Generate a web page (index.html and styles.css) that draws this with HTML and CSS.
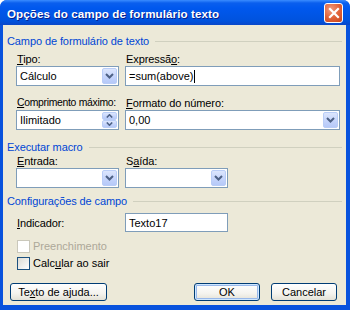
FILE: index.html
```html
<!DOCTYPE html>
<html lang="pt">
<head>
<meta charset="utf-8">
<title>Opções do campo de formulário texto</title>
<link rel="stylesheet" href="styles.css">
</head>
<body>
<div class="window">
  <div class="titlebar">
    <span class="title">Opções do campo de formulário texto</span>
    <div class="close">
      <svg width="12" height="12" viewBox="0 0 12 12"><path d="M2 2 L10 10 M10 2 L2 10" stroke="#fff" stroke-width="2.2" stroke-linecap="square"/></svg>
    </div>
  </div>
  <div class="content">
    <div class="group-head"><span>Campo de formulário de texto</span><div class="rule"></div></div>
    <div class="grid wide r1">
      <div class="field">
        <div class="label"><u>T</u>ipo:</div>
        <div class="box combo"><span class="val">Cálculo</span><span class="drop"><svg width="9" height="6" viewBox="0 0 9 6"><path d="M1 1 L4.5 4.5 L8 1" fill="none" stroke="#4D6185" stroke-width="2"/></svg></span></div>
      </div>
      <div class="field">
        <div class="label">Expressã<u>o</u>:</div>
        <div class="box"><span class="val">=sum(above)</span><span class="caret"></span></div>
      </div>
    </div>
    <div class="grid wide r2">
      <div class="field">
        <div class="label tight"><u>C</u>omprimento máximo:</div>
        <div class="box combo"><span class="val">Ilimitado</span><span class="spin"><span class="sb"><svg width="7" height="4" viewBox="0 0 7 4"><path d="M0.8 3.5 L3.5 0.8 L6.2 3.5" fill="none" stroke="#4D6185" stroke-width="1.6"/></svg></span><span class="sb"><svg width="7" height="4" viewBox="0 0 7 4"><path d="M0.8 0.5 L3.5 3.2 L6.2 0.5" fill="none" stroke="#4D6185" stroke-width="1.6"/></svg></span></span></div>
      </div>
      <div class="field">
        <div class="label"><u>F</u>ormato do número:</div>
        <div class="box combo"><span class="val">0,00</span><span class="drop"><svg width="9" height="6" viewBox="0 0 9 6"><path d="M1 1 L4.5 4.5 L8 1" fill="none" stroke="#4D6185" stroke-width="2"/></svg></span></div>
      </div>
    </div>
    <div class="group-head g2"><span>Executar macro</span><div class="rule"></div></div>
    <div class="grid narrow">
      <div class="field">
        <div class="label"><u>E</u>ntrada:</div>
        <div class="box combo"><span class="val"></span><span class="drop"><svg width="9" height="6" viewBox="0 0 9 6"><path d="M1 1 L4.5 4.5 L8 1" fill="none" stroke="#4D6185" stroke-width="2"/></svg></span></div>
      </div>
      <div class="field">
        <div class="label">S<u>a</u>ída:</div>
        <div class="box combo"><span class="val"></span><span class="drop"><svg width="9" height="6" viewBox="0 0 9 6"><path d="M1 1 L4.5 4.5 L8 1" fill="none" stroke="#4D6185" stroke-width="2"/></svg></span></div>
      </div>
    </div>
    <div class="group-head g3"><span>Configurações de campo</span><div class="rule"></div></div>
    <div class="grid narrow ind">
      <div class="label"><u>I</u>ndicador:</div>
      <div class="box tb"><span class="val">Texto17</span></div>
    </div>
    <div class="check disabled c1"><span class="cb"></span><span>Preenchimento</span></div>
    <div class="check c2"><span class="cb"></span><span>Calc<u>u</u>lar ao sair</span></div>
    <div class="buttons">
      <div class="btn help">Te<u>x</u>to de ajuda...</div>
      <div class="spacer"></div>
      <div class="btn ok">OK</div>
      <div class="btn cancel">Cancelar</div>
    </div>
  </div>
</div>
</body>
</html>
```
FILE: styles.css
```css
html, body { margin: 0; padding: 0; }
body { width: 350px; height: 310px; overflow: hidden; background: #fff; font-family: "Liberation Sans", Arial, sans-serif; font-size: 11px; color: #000; }
.window { width: 350px; height: 310px; display: flex; flex-direction: column; background: #0852DD; border-radius: 7px 7px 0 0; box-sizing: border-box; }
.titlebar { height: 25px; flex: none; display: flex; align-items: center; padding: 0 7px 0 7px; border-radius: 7px 7px 0 0;
  background: linear-gradient(#3A8CFF 0, #0A5FEE 3px, #0058EE 8px, #0055E5 15px, #0052DD 21px, #0A47C8 25px); }
.title { flex: 1; color: #fff; font-weight: bold; font-size: 11.6px; letter-spacing: 0.1px; text-shadow: 1px 1px 0 #0A1E8A; padding-top: 1px; white-space: nowrap; }
.close { width: 17px; height: 18px; border: 1px solid #fff; border-radius: 3px; display: flex; align-items: center; justify-content: center; margin-top: 1px;
  background: radial-gradient(circle at 35% 30%, #F19A7E 0, #E1633A 50%, #C8431A 100%); }
.content { flex: 1; margin: 0 4px 5px 3px; background: #ECE9D8; padding: 9px 4px 0 4px; box-sizing: border-box; }
.group-head { display: flex; align-items: center; height: 14px; line-height: 14px; color: #0046D5; gap: 6px; white-space: nowrap; letter-spacing: -0.1px; }
.group-head .rule { flex: 1; height: 1px; background: #D0D0BF; margin-top: 1px; }
.g2 { margin-top: 10px; }
.g3 { margin-top: 6px; }
.grid { display: grid; column-gap: 6px; padding-left: 9px; }
.wide { grid-template-columns: 103px 215px; }
.narrow { grid-template-columns: 103px 103px; }
.r1 { margin-top: 4px; }
.r2 { margin-top: 10px; }
.label { height: 14px; line-height: 14px; padding-left: 1px; white-space: nowrap; letter-spacing: -0.1px; }
.label.tight { font-size: 10.4px; letter-spacing: -0.3px; }
.box { height: 20px; box-sizing: border-box; border: 1px solid #7F9DB9; background: #fff; display: flex; align-items: center; }
.val { flex: 1; padding-left: 3px; line-height: 14px; white-space: nowrap; }
.box .caret { width: 1px; height: 13px; background: #000; margin-right: auto; }
.box:has(.caret) .val { flex: none; }
.drop { width: 15px; height: 16px; margin: 1px; box-sizing: border-box; border: 1px solid #B9CDF7; border-radius: 2px; display: flex; align-items: center; justify-content: center;
  background: linear-gradient(#DCE6FD, #C3D3FB 60%, #B6C9F8); }
.spin { width: 15px; height: 16px; margin: 1px; display: flex; flex-direction: column; gap: 0; }
.sb { flex: 1; box-sizing: border-box; border: 1px solid #B9CDF7; border-radius: 2px; display: flex; align-items: center; justify-content: center;
  background: linear-gradient(#DCE6FD, #C3D3FB 60%, #B6C9F8); }
.ind { margin-top: 5px; align-items: center; }
.tb { height: 19px; }
.check { display: flex; align-items: center; gap: 3px; height: 13px; line-height: 13px; padding-left: 10px; }
.cb { width: 13px; height: 13px; box-sizing: border-box; border: 1px solid #1C5180; background: linear-gradient(135deg, #DCDBD4, #fff); }
.disabled { color: #ACA899; }
.disabled .cb { border-color: #CAC8BB; background: #fff; }
.c1 { margin-top: 8px; }
.c2 { margin-top: 4px; }
.buttons { display: flex; margin-top: 13px; padding: 0 5px 0 3px; }
.spacer { flex: 1; }
.btn { height: 18px; box-sizing: border-box; border: 1px solid #003C74; border-radius: 3px; display: flex; align-items: center; justify-content: center;
  background: linear-gradient(#FFFFFF, #F4F3EE 60%, #E3E1D6); }
.help { width: 97px; }
.ok { width: 66px; box-shadow: inset 0 0 0 1px #CEE7FF, inset 0 0 0 2px #98B8EA; }
.cancel { width: 66px; margin-left: 11px; }
```
